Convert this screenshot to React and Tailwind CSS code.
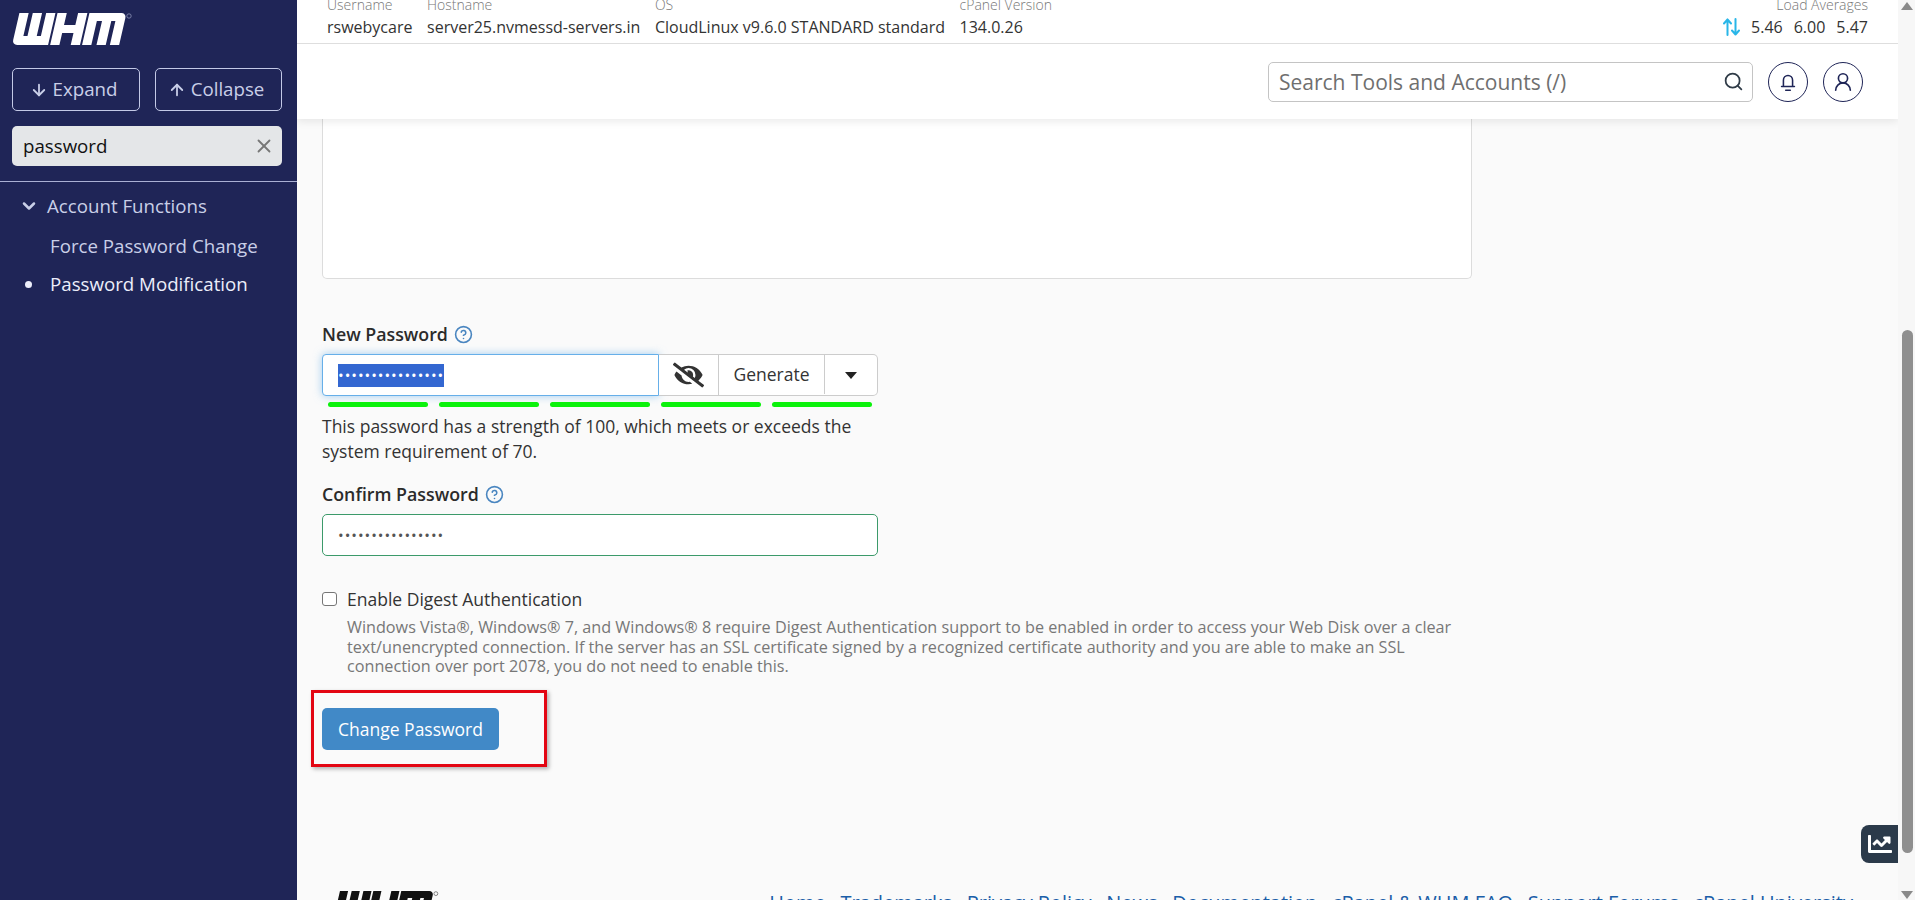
import React from "react";
import { ArrowDown, ArrowUp, ChevronDown, X, Search, CircleHelp, UserRound } from "lucide-react";
import { FaEyeSlash, FaChartLine } from "react-icons/fa";

function Logo({ className, fill, mark }) {
  return (
    <svg viewBox="0 0 120 32" className={className} aria-hidden="true">
      <g transform="translate(7.4 0) skewX(-13) scale(1.03 1)" fill={fill}>
        <path d="M0 0h9v23h4V0h9v23h4V0h9v32H5a5 5 0 0 1-5-5z" />
        <path d="M37 0h9v12h11V0h9v32h-9V20H46v12h-9z" />
        <path d="M68 0h31a5 5 0 0 1 5 5v27h-9V8h-4v24h-9V8h-5v24h-9z" />
      </g>
      <circle cx="117" cy="3" r="2.2" fill="none" stroke={mark} strokeWidth="0.8" />
    </svg>
  );
}

function Info({ label, value }) {
  return (
    <div className="flex flex-col">
      <span className="text-[14px] leading-[20px] text-[#777] font-light">{label}</span>
      <span className="mt-[1px] text-[16px] leading-[22px] text-[#333]">{value}</span>
    </div>
  );
}

const bars = [0, 1, 2, 3, 4];
const footerLinks = ["Home", "Trademarks", "Privacy Policy", "News", "Documentation", "cPanel & WHM FAQ", "Support Forums", "cPanel University"];

function Help() {
  return <CircleHelp className="h-[19px] w-[19px] text-[#4a86c0]" strokeWidth={2} />;
}

export default function App() {
  return (
    <div className="flex h-[900px] w-[1915px] overflow-hidden bg-[#fafafa] font-['Open_Sans',sans-serif] text-[#333]">
      <aside className="flex w-[297px] shrink-0 flex-col bg-[#1f2557]">
        <div className="px-[12px] pt-[13px]">
          <Logo className="h-[32px] w-[120px]" fill="#ffffff" mark="#8d93b8" />
          <div className="mt-[23px] flex gap-[15px]">
            <button className="flex h-[43px] w-[128px] items-center justify-center gap-[5px] rounded-[5px] border border-[#c3c9e6] pr-[5px] text-[18.7px] text-[#c9cfe8]">
              <ArrowDown className="h-[18px] w-[18px]" strokeWidth={2.4} />Expand
            </button>
            <button className="flex h-[43px] w-[127px] items-center justify-center gap-[5px] rounded-[5px] border border-[#c3c9e6] pr-[5px] text-[18.7px] text-[#c9cfe8]">
              <ArrowUp className="h-[18px] w-[18px]" strokeWidth={2.4} />Collapse
            </button>
          </div>
          <div className="mt-[15px] flex h-[40px] w-[270px] items-center justify-between rounded-[5px] bg-[#e4e6e8] pl-[11px] pr-[7px] text-[18.7px] text-[#111]">
            <span>password</span>
            <X className="h-[22px] w-[22px] text-[#777]" strokeWidth={2} />
          </div>
        </div>
        <div className="mt-[15px] h-px w-full bg-[#aab0d4]" />
        <div className="flex items-center pl-[19px] pt-[10px] text-[18.7px] leading-[28px] text-[#c9cfe8]">
          <ChevronDown className="h-[20px] w-[20px]" strokeWidth={3} />
          <span className="ml-[8px]">Account Functions</span>
        </div>
        <div className="pl-[50px] pt-[12px] text-[18.7px] leading-[28px] text-[#c9cfe8]">Force Password Change</div>
        <div className="flex items-center pl-[25px] pt-[10px] text-[18.7px] leading-[28px] text-[#eceefa]">
          <span className="h-[7px] w-[7px] rounded-full bg-[#eceefa]" />
          <span className="ml-[18px]">Password Modification</span>
        </div>
      </aside>

      <main className="relative flex min-w-0 flex-1 flex-col overflow-hidden">
        <header className="z-10 shrink-0 bg-white shadow-[0_3px_8px_rgba(0,0,0,0.08)]">
          <div className="flex h-[44px] items-start justify-between border-b border-[#dedede] pl-[30px] pr-[30px]">
            <div className="-mt-[5px] flex gap-[14.6px]">
              <Info label="Username" value="rswebycare" />
              <Info label="Hostname" value="server25.nvmessd-servers.in" />
              <Info label="OS" value="CloudLinux v9.6.0 STANDARD standard" />
              <Info label="cPanel Version" value="134.0.26" />
            </div>
            <div className="-mt-[5px] flex flex-col items-end">
              <span className="text-[14px] leading-[20px] text-[#777] font-light">Load Averages</span>
              <div className="mt-[1px] flex items-center gap-[11px] text-[16px] leading-[22px] text-[#333]">
                <svg viewBox="0 0 17 18" className="h-[18px] w-[17px]" fill="none" stroke="#29b6e8" strokeWidth="2" strokeLinecap="round" strokeLinejoin="round">
                  <path d="M4.5 17V1.5M1 5.5l3.5-4 3.5 4" />
                  <path d="M12.5 1v15.5M9 12.5l3.500 4 3.500-4" />
                </svg>
                <span>5.46</span>
                <span>6.00</span>
                <span>5.47</span>
              </div>
            </div>
          </div>
          <div className="flex h-[75px] items-center justify-end gap-[15px] pr-[35px]">
            <div className="flex h-[40px] w-[485px] items-center justify-between rounded-[5px] border border-[#c4c4c4] pl-[10px] pr-[8px] text-[21px] text-[#6f6f6f]">
              <span className="translate-y-px">Search Tools and Accounts (/)</span>
              <Search className="h-[21px] w-[21px] text-[#2f3b47]" strokeWidth={2} />
            </div>
            <div className="flex h-[40px] w-[40px] items-center justify-center rounded-full border border-[#1f2557] text-[#1f2557]">
              <svg viewBox="0 0 24 24" className="h-[22px] w-[22px]" fill="none" stroke="currentColor" strokeWidth="1.7" strokeLinecap="round">
                <path d="M7 16v-6a5 5 0 0 1 10 0v6" />
                <path d="M5 17h14" />
                <path d="M9.500 21h5" />
              </svg>
            </div>
            <div className="flex h-[40px] w-[40px] items-center justify-center rounded-full border border-[#1f2557] text-[#1f2557]">
              <UserRound className="h-[22px] w-[22px]" strokeWidth={1.8} />
            </div>
          </div>
        </header>

        <div className="pl-[25px]">
          <div className="h-[160px] w-[1150px] rounded-b-[5px] border border-t-0 border-[#dcdcdc] bg-white" />

          <div className="mt-[43px] flex items-center gap-[6px] text-[17.8px] font-semibold leading-[24px] text-[#2b2b2b]">
            New Password <Help />
          </div>
          <div className="mt-[8px] flex h-[42px] w-[556px] text-[17.5px]">
            <div className="flex w-[337px] items-center rounded-l-[4px] border border-[#66afe9] bg-white pl-[15px] shadow-[0_0_8px_rgba(102,175,233,0.6)]">
              <span className="flex h-[23px] items-center bg-[#3367d1] text-[15px] tracking-[1px] text-white">••••••••••••••••</span>
            </div>
            <div className="flex flex-1 rounded-r-[5px] border border-l-0 border-[#cccccc] bg-white">
              <div className="flex w-[60px] items-center justify-center border-r border-[#cccccc] text-[#333]">
                <FaEyeSlash className="h-[26px] w-[31px]" />
              </div>
              <div className="flex w-[106px] -translate-y-px items-center justify-center border-r border-[#cccccc]">Generate</div>
              <div className="flex flex-1 items-center justify-center">
                <svg viewBox="0 0 12 7" className="h-[7px] w-[12px]"><path d="M0 0h12L6 7z" fill="#222" /></svg>
              </div>
            </div>
          </div>
          <div className="mt-[6px] flex gap-[11px] pl-[6px]">
            {bars.map((b) => (
              <div key={b} className="h-[5px] w-[100px] rounded-full bg-[#0bf20b]" />
            ))}
          </div>
          <p className="mt-[6px] w-[556px] translate-y-[0.5px] text-[17.5px] leading-[25px] text-[#333]">
            This password has a strength of 100, which meets or exceeds the system requirement of 70.
          </p>
          <div className="mt-[19px] flex items-center gap-[6px] text-[17.8px] font-semibold leading-[24px] text-[#2b2b2b]">
            Confirm Password <Help />
          </div>
          <div className="mt-[8px] flex h-[42px] w-[556px] items-center rounded-[5px] border border-[#3c9a6a] bg-white pl-[15px]">
            <span className="text-[15px] tracking-[1px] text-[#555]">••••••••••••••••</span>
          </div>
          <label className="mt-[31px] flex items-center gap-[10px] text-[17.5px] leading-[24px] text-[#333]">
            <span className="h-[14px] w-[15px] rounded-[3px] border border-[#767676] bg-white" />
            Enable Digest Authentication
          </label>
          <p className="ml-[25px] mt-[7px] w-[1124px] text-[16.2px] leading-[19.7px] text-[#777]">
            Windows Vista®, Windows® 7, and Windows® 8 require Digest Authentication support to be enabled in order to access your Web Disk over a clear text/unencrypted connection. If the server has an SSL certificate signed by a recognized certificate authority and you are able to make an SSL connection over port 2078, you do not need to enable this.
          </p>
          <div className="relative mt-[31px] w-fit">
            <button className="flex h-[42px] w-[177px] items-center justify-center rounded-[5px] bg-[#4189c7] text-[17.5px] text-white">Change Password</button>
            <div className="absolute -left-[11px] -top-[18px] h-[77px] w-[236px] border-[3px] border-[#e30613] shadow-[2px_2px_4px_rgba(0,0,0,0.3)]" />
          </div>
        </div>

        <footer className="mt-[141px] flex items-start justify-between pl-[29px] pr-[45px]">
          <Logo className="h-[28px] w-[120px]" fill="#111111" mark="#555555" />
          <div className="flex gap-[14.65px] text-[20px] leading-[24px] text-[#1a5ea8]">
            {footerLinks.map((l) => (
              <span key={l}>{l}</span>
            ))}
          </div>
        </footer>

        <div className="absolute right-0 top-[825px] flex h-[38px] w-[37px] items-center justify-center rounded-l-[8px] bg-[#2b3a4a] text-white">
          <FaChartLine className="h-[24px] w-[28px]" />
        </div>
      </main>

      <div className="flex w-[17px] shrink-0 flex-col items-center bg-[#f7f7f7]">
        <svg viewBox="0 0 12 8" className="mt-[2px] h-[8px] w-[12px] shrink-0"><path d="M6 0l6 8H0z" fill="#8a8a8a" /></svg>
        <div className="ml-[1px] mt-[320px] h-[523px] w-[11px] shrink-0 rounded-full bg-[#8f8f8f]" />
        <svg viewBox="0 0 12 8" className="mt-[38px] h-[8px] w-[12px] shrink-0"><path d="M0 0h12L6 8z" fill="#8a8a8a" /></svg>
      </div>
    </div>
  );
}
